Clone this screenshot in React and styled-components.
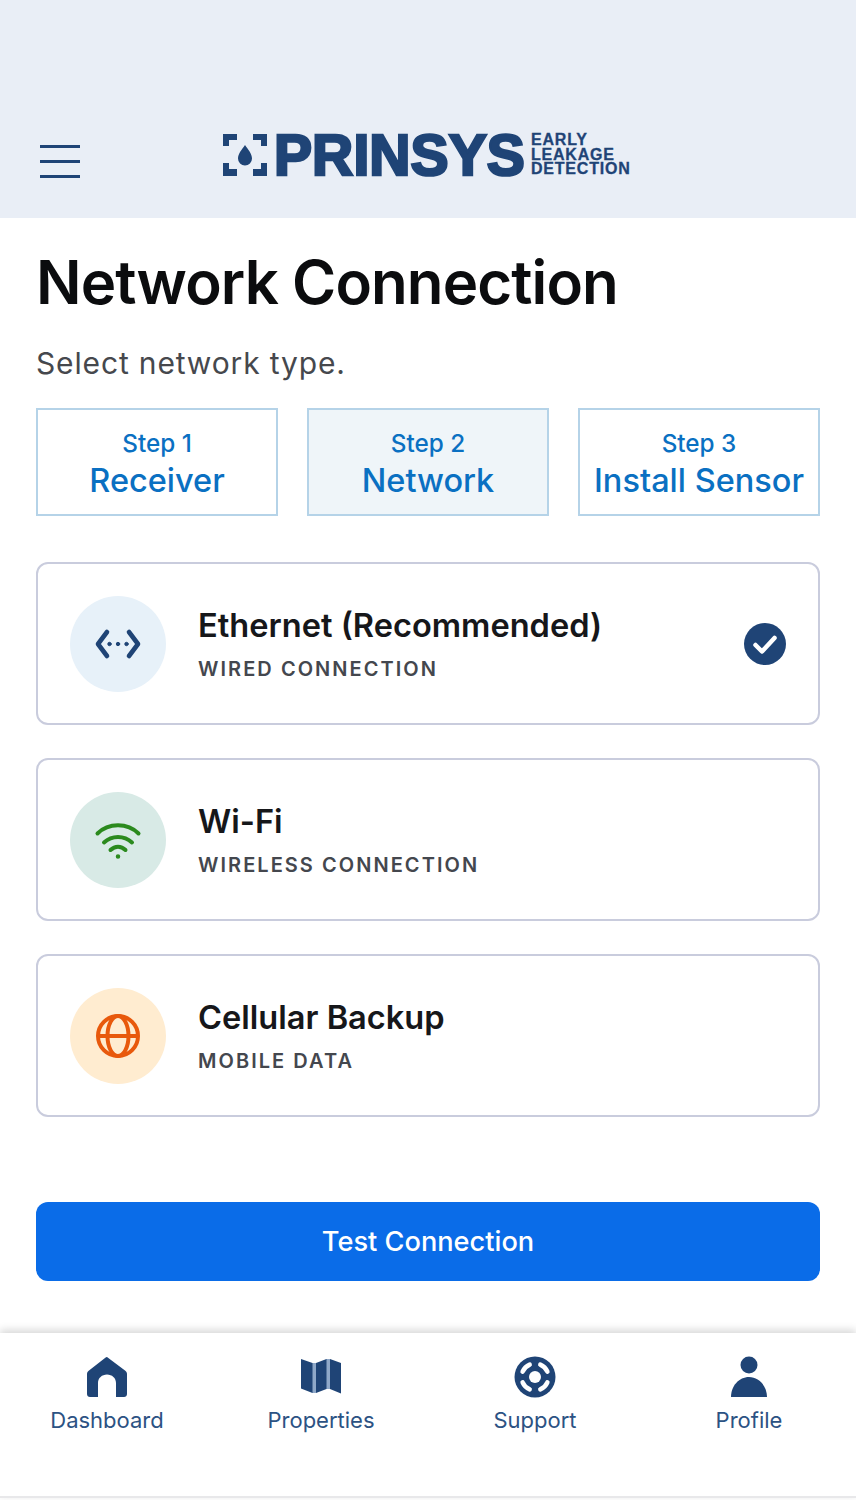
import React from 'react'
import styled, { createGlobalStyle } from 'styled-components'

const GlobalStyle = createGlobalStyle`
  html, body {
    margin: 0;
    padding: 0;
    background: #fff;
  }
  body {
    font-family: Inter, "Liberation Sans", sans-serif;
  }
`

const Page = styled.div`
  width: 856px;
  height: 1500px;
  display: flex;
  flex-direction: column;
  overflow: hidden;
  background: #fff;
`

const Header = styled.header`
  height: 218px;
  box-sizing: border-box;
  background: #e9eef6;
  display: flex;
  align-items: flex-end;
  padding: 0 0 40px 40px;
`

const Burger = styled.div`
  width: 40px;
  height: 33px;
  display: flex;
  flex-direction: column;
  justify-content: space-between;
  span {
    display: block;
    height: 3px;
    background: #1f4476;
  }
`

const Logo = styled.div`
  display: flex;
  align-items: center;
  margin-left: 143px;
  color: #1f4476;
  height: 44px;
  margin-bottom: 1px;
`

const LogoMark = styled.svg`
  width: 44px;
  height: 44px;
  flex: none;
`

const LogoName = styled.div`
  font-family: "Liberation Sans", sans-serif;
  font-weight: 700;
  font-size: 57px;
  line-height: 44px;
  margin-left: 7px;
  letter-spacing: 0.1px;
  -webkit-text-stroke: 2.6px #1f4476;
`

const LogoTag = styled.div`
  font-family: "Liberation Sans", sans-serif;
  font-weight: 700;
  font-size: 16px;
  line-height: 14.5px;
  letter-spacing: 0.8px;
  margin-left: 6px;
  text-transform: uppercase;
  -webkit-text-stroke: 0.3px #1f4476;
`

const Content = styled.main`
  flex: 1;
  padding: 0 36px;
  display: flex;
  flex-direction: column;
`

const Title = styled.h1`
  margin: 26px 0 0;
  font-size: 60px;
  line-height: 76px;
  font-weight: 600;
  letter-spacing: -0.9px;
  color: #0b0c0e;
`

const Subtitle = styled.p`
  margin: 25px 0 0;
  font-size: 30px;
  line-height: 36px;
  font-weight: 400;
  letter-spacing: 0.85px;
  color: #46484d;
`

const Steps = styled.div`
  display: grid;
  grid-template-columns: repeat(3, 1fr);
  gap: 29px;
  margin-top: 27px;
`

const Step = styled.div`
  height: 108px;
  box-sizing: border-box;
  border: 2px solid #b5d3e8;
  background: ${(p) => (p.$active ? '#eff5f9' : '#fff')};
  color: #0a70c2;
  display: flex;
  flex-direction: column;
  align-items: center;
  justify-content: center;
  gap: 2px;
  padding-top: 4px;
  white-space: nowrap;
`

const StepLabel = styled.div`
  font-size: 24.3px;
  line-height: 32px;
  font-weight: 500;
`

const StepName = styled.div`
  font-size: 32.5px;
  line-height: 40px;
  font-weight: 500;
`

const Options = styled.div`
  display: flex;
  flex-direction: column;
  gap: 33px;
  margin-top: 46px;
`

const Option = styled.div`
  height: 163px;
  box-sizing: border-box;
  border: 2px solid #c9ccdd;
  border-radius: 12px;
  display: flex;
  align-items: center;
  padding: 0 32px;
`

const IconCircle = styled.div`
  width: 96px;
  height: 96px;
  border-radius: 50%;
  flex: none;
  display: flex;
  align-items: center;
  justify-content: center;
  background: ${(p) => p.$bg};
  color: ${(p) => p.$fg};
  svg {
    width: 48px;
    height: 48px;
  }
`

const OptionText = styled.div`
  flex: 1;
  margin-left: 32px;
`

const OptionTitle = styled.div`
  font-size: 32.6px;
  line-height: 40px;
  font-weight: 600;
  color: #16171a;
`

const OptionSub = styled.div`
  margin-top: 11px;
  font-size: 20px;
  line-height: 26px;
  font-weight: 600;
  letter-spacing: 2.05px;
  text-transform: uppercase;
  color: #44474e;
`

const Check = styled.svg`
  width: 44px;
  height: 44px;
  flex: none;
  margin-right: -1px;
`

const TestButton = styled.button`
  display: block;
  margin-top: 85px;
  height: 79px;
  width: 100%;
  border: 0;
  border-radius: 12px;
  background: #0a6ce8;
  color: #fff;
  font-family: inherit;
  font-size: 27.2px;
  font-weight: 500;
`

const BottomNav = styled.nav`
  height: 165px;
  box-sizing: border-box;
  display: grid;
  grid-template-columns: repeat(4, 214px);
  box-shadow: 0 -3px 8px rgba(0, 0, 0, 0.16);
  border-bottom: 2px solid #e8e8ea;
  margin-bottom: 2px;
  background: #fff;
`

const NavItem = styled.div`
  display: flex;
  flex-direction: column;
  align-items: center;
  padding-top: 23px;
  color: #1f4476;
  svg {
    width: 42px;
    height: 42px;
    display: block;
  }
`

const NavLabel = styled.div`
  margin-top: 7px;
  font-size: 22px;
  line-height: 30px;
  font-weight: 400;
  color: #2c5283;
`

const navItems = [
  {
    label: 'Dashboard',
    icon: (
      <svg viewBox="0 0 42 42" fill="currentColor">
        <path d="M21 1 39 14.500c1.200.9 2 2 2 3.600V38c0 1.700-1.300 3-3 3h-8V27c0-5-4-8.500-9-8.500S12 22 12 27v14H4c-1.700 0-3-1.300-3-3V18.100c0-1.600.8-2.700 2-3.600L19 2c.7-.6 1.400-1 2-1Z" />
      </svg>
    ),
  },
  {
    label: 'Properties',
    icon: (
      <svg viewBox="0 0 42 42" fill="currentColor">
        <path d="M12 7 16 7V37H12ZM26 3 30 3V33H26Z" fill="#8fa8c8" />
        <path d="M1 3 12.500 7V37L1 32.500Z" />
        <path d="M16 7 26.500 3V33L16 37Z" />
        <path d="M30 3 41 7V37.500L30 33Z" />
      </svg>
    ),
  },
  {
    label: 'Support',
    icon: (
      <svg viewBox="0 0 42 42">
        <circle cx="21" cy="21" r="20.500" fill="currentColor" />
        <circle cx="21" cy="21" r="6" fill="#fff" />
        <path
          d="M8.600 15.700A13.500 13.500 0 0 1 15.700 8.600M33.400 15.700A13.500 13.500 0 0 0 26.300 8.600M8.600 26.300A13.500 13.500 0 0 0 15.700 33.400M33.400 26.300A13.500 13.500 0 0 1 26.300 33.400"
          fill="none"
          stroke="#fff"
          strokeWidth="4.500"
          strokeLinecap="round"
        />
      </svg>
    ),
  },
  {
    label: 'Profile',
    icon: (
      <svg viewBox="0 0 42 42" fill="currentColor">
        <circle cx="21" cy="9" r="8.500" />
        <path d="M3 41C3 30 11 21 21 21s18 9 18 20Z" />
      </svg>
    ),
  },
]

function App() {
  return (
    <Page>
      <GlobalStyle />
      <Header>
        <Burger>
          <span />
          <span />
          <span />
        </Burger>
        <Logo>
          <LogoMark viewBox="0 0 44 44" fill="currentColor">
            <path d="M0 1H14V7H6V13H0ZM30 1H44V13H38V7H30ZM0 30H6V36H14V43H0ZM38 30H44V43H30V36H38Z" />
            <path d="M22 12c3 4.500 7 8.500 7 13.500a7 7 0 0 1-14 0C15 20.500 19 16.500 22 12Z" />
          </LogoMark>
          <LogoName>PRINSYS</LogoName>
          <LogoTag>
            Early
            <br />
            Leakage
            <br />
            Detection
          </LogoTag>
        </Logo>
      </Header>
      <Content>
        <Title>Network Connection</Title>
        <Subtitle>Select network type.</Subtitle>
        <Steps>
          <Step>
            <StepLabel>Step 1</StepLabel>
            <StepName>Receiver</StepName>
          </Step>
          <Step $active>
            <StepLabel>Step 2</StepLabel>
            <StepName>Network</StepName>
          </Step>
          <Step>
            <StepLabel>Step 3</StepLabel>
            <StepName>Install Sensor</StepName>
          </Step>
        </Steps>
        <Options>
          <Option>
            <IconCircle $bg="#e7f1f9" $fg="#1f4476">
              <svg viewBox="0 0 48 48" fill="none" stroke="currentColor" strokeWidth="4.600" strokeLinecap="round" strokeLinejoin="round">
                <path d="M13 12 4 24 13 36M35 12l9 12-9 12" />
                <circle cx="15.500" cy="24" r="1.700" fill="currentColor" strokeWidth="1" />
                <circle cx="24" cy="24" r="1.700" fill="currentColor" strokeWidth="1" />
                <circle cx="32.500" cy="24" r="1.700" fill="currentColor" strokeWidth="1" />
              </svg>
            </IconCircle>
            <OptionText>
              <OptionTitle>Ethernet (Recommended)</OptionTitle>
              <OptionSub>Wired Connection</OptionSub>
            </OptionText>
            <Check viewBox="0 0 44 44">
              <circle cx="22" cy="22" r="21" fill="#1f4476" />
              <path d="M12.500 23 19 29.500 31.500 16" fill="none" stroke="#fff" strokeWidth="4.500" strokeLinecap="round" strokeLinejoin="round" />
            </Check>
          </Option>
          <Option>
            <IconCircle $bg="#d8eae6" $fg="#2b8a1e">
              <svg viewBox="0 0 48 48" fill="none" stroke="currentColor" strokeWidth="4" strokeLinecap="round">
                <path d="M3.500 17.500C14.500 6.500 33.500 6.500 44.500 17.500" />
                <path d="M10 26.500C18 19 30 19 38 26.500" />
                <path d="M16.500 34C21 29.500 27 29.500 31.500 34" />
                <circle cx="24" cy="40.500" r="1.500" fill="currentColor" strokeWidth="1.500" />
              </svg>
            </IconCircle>
            <OptionText>
              <OptionTitle>Wi-Fi</OptionTitle>
              <OptionSub>Wireless Connection</OptionSub>
            </OptionText>
          </Option>
          <Option>
            <IconCircle $bg="#ffecd0" $fg="#e8590c">
              <svg viewBox="0 0 48 48" fill="none" stroke="currentColor" strokeWidth="4">
                <circle cx="24" cy="24" r="20" />
                <ellipse cx="24" cy="24" rx="10.500" ry="20" />
                <path d="M4 24H44" />
              </svg>
            </IconCircle>
            <OptionText>
              <OptionTitle>Cellular Backup</OptionTitle>
              <OptionSub>Mobile Data</OptionSub>
            </OptionText>
          </Option>
        </Options>
        <TestButton>Test Connection</TestButton>
      </Content>
      <BottomNav>
        {navItems.map((item) => (
          <NavItem key={item.label}>
            {item.icon}
            <NavLabel>{item.label}</NavLabel>
          </NavItem>
        ))}
      </BottomNav>
    </Page>
  )
}

export default App
